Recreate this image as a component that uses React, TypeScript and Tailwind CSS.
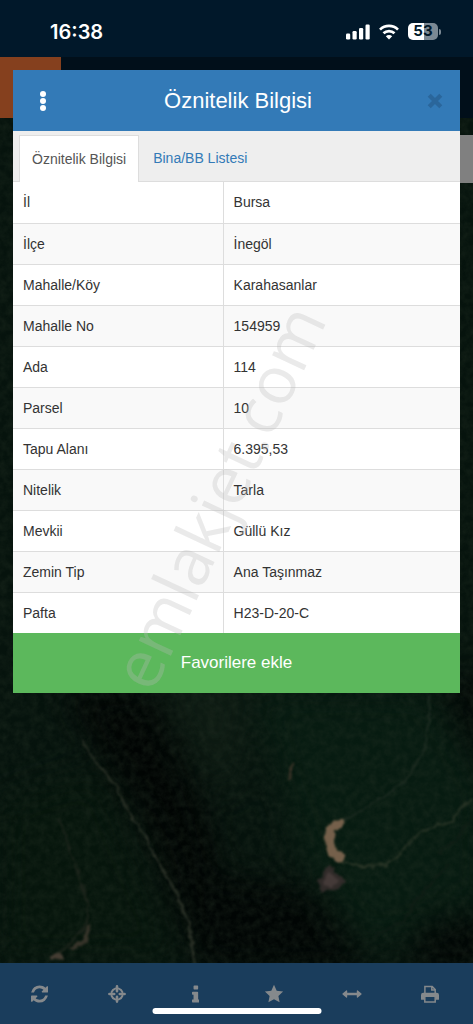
import type { ReactNode } from "react";

const rows = [
    { label: "İl", value: "Bursa" },
    { label: "İlçe", value: "İnegöl" },
    { label: "Mahalle/Köy", value: "Karahasanlar" },
    { label: "Mahalle No", value: "154959" },
    { label: "Ada", value: "114" },
    { label: "Parsel", value: "10" },
    { label: "Tapu Alanı", value: "6.395,53" },
    { label: "Nitelik", value: "Tarla" },
    { label: "Mevkii", value: "Güllü Kız" },
    { label: "Zemin Tip", value: "Ana Taşınmaz" },
    { label: "Pafta", value: "H23-D-20-C" },
];

const tools: { name: string; icon: ReactNode }[] = [
    {
        name: "Yenile",
        icon: (
            <svg viewBox="0 0 1536 1792" className="h-5 fill-current" aria-hidden>
                <path d="M1511 1056q0 5-1 7-64 268-268 434.5t-478 166.5q-146 0-282.5-55t-243.5-157l-129 129q-19 19-45 19t-45-19-19-45v-448q0-26 19-45t45-19h448q26 0 45 19t19 45-19 45l-137 137q71 66 161 102t187 36q134 0 250-65t186-179q11-17 53-117 8-23 30-23h192q13 0 22.5 9.5t9.5 22.5zm25-800v448q0 26-19 45t-45 19h-448q-26 0-45-19t-19-45 19-45l138-138q-148-137-349-137-134 0-250 65t-186 179q-11 17-53 117-8 23-30 23h-199q-13 0-22.5-9.5t-9.5-22.5v-7q65-268 270-434.5t480-166.5q146 0 284 55.5t245 156.5l130-129q19-19 45-19t45 19 19 45z" />
            </svg>
        ),
    },
    {
        name: "Konum",
        icon: (
            <svg viewBox="0 0 18 18" className="h-[18px] fill-none stroke-current" strokeWidth="2" strokeLinecap="round" aria-hidden>
                <path d="M10.8 3.6a5.8 5.8 0 0 1 3.6 3.6M14.4 10.8a5.8 5.8 0 0 1-3.6 3.6M7.2 14.4a5.8 5.8 0 0 1-3.6-3.6M3.6 7.2a5.8 5.8 0 0 1 3.6-3.6" />
                <path d="M9 1.4v4.8M9 11.8v4.8M1.4 9h4.8M11.8 9h4.8" strokeWidth="2.6" />
            </svg>
        ),
    },
    {
        name: "Bilgi",
        icon: (
            <svg viewBox="0 0 640 1664" className="h-5 fill-current" aria-hidden>
                <path d="M640 1344v128q0 26-19 45t-45 19h-512q-26 0-45-19t-19-45v-128q0-26 19-45t45-19h64v-384h-64q-26 0-45-19t-19-45v-128q0-26 19-45t45-19h384q26 0 45 19t19 45v576h64q26 0 45 19t19 45zm-128-1152v192q0 26-19 45t-45 19h-256q-26 0-45-19t-19-45v-192q0-26 19-45t45-19h256q26 0 45 19t19 45z" />
            </svg>
        ),
    },
    {
        name: "Favoriler",
        icon: (
            <svg viewBox="0 0 20 20" className="h-5 fill-current" aria-hidden>
                <path d="M10 .8l2.7 5.9 6.4.8-4.7 4.4 1.2 6.4-5.6-3.1-5.6 3.1 1.2-6.4L.9 7.5l6.4-.8z" />
            </svg>
        ),
    },
    {
        name: "Mesafe",
        icon: (
            <svg viewBox="0 0 20 8" className="h-2 fill-current" aria-hidden>
                <path d="M.6 3.5 4.2.4q.9-.6 1 .5v1.9h9.6V.9q.1-1.1 1-.5l3.6 3.1q.5.5 0 1l-3.6 3.1q-.9.6-1-.5V5.2H5.2v1.9q-.1 1.1-1 .5L.6 4.5q-.5-.5 0-1z" />
            </svg>
        ),
    },
    {
        name: "Yazdır",
        icon: (
            <svg viewBox="0 0 18 18" className="h-[18px]" aria-hidden>
                <path d="M3.9 8V1.5h7.3l3 3V8M10.8 1.5v3.4h3.4" fill="none" stroke="currentColor" strokeWidth="1.5" />
                <path d="M2.2 7.8h13.6A2.2 2.2 0 0 1 18 10v4.2q0 .6-.6.6H15V12H3v2.800H.6q-.6 0-.6-.6V10a2.200 2.200 0 0 1 2.200-2.200z" fill="currentColor" />
                <path d="M3.800 12v4.900h10.400V12" fill="none" stroke="currentColor" strokeWidth="1.500" />
            </svg>
        ),
    },
];

function SatelliteMap() {
    return (
        <svg
            className="absolute inset-0 -z-10 h-full w-full"
            viewBox="0 0 473 1024"
            preserveAspectRatio="xMidYMid slice"
            aria-hidden
        >
            <defs>
                <filter id="canopy" x="0" y="0" width="100%" height="100%" colorInterpolationFilters="sRGB">
                    <feTurbulence type="fractalNoise" baseFrequency="0.13" numOctaves="5" seed="8" />
                    <feColorMatrix values="0 0 0 0 0.15  0 0 0 0 0.2  0 0 0 0 0.15  1.1 0.4 0 0 -0.5" />
                </filter>
                <filter id="rough" filterUnits="userSpaceOnUse" x="0" y="680" width="473" height="300" colorInterpolationFilters="sRGB">
                    <feTurbulence type="fractalNoise" baseFrequency="0.12" numOctaves="3" seed="3" result="noise" />
                    <feDisplacementMap in="SourceGraphic" in2="noise" scale="7" xChannelSelector="R" yChannelSelector="G" />
                    <feGaussianBlur stdDeviation="0.8" />
                </filter>
                <filter id="soft" filterUnits="userSpaceOnUse" x="-80" y="600" width="640" height="480" colorInterpolationFilters="sRGB">
                    <feGaussianBlur stdDeviation="16" />
                </filter>
            </defs>
            <rect width="473" height="1024" fill="#06130d" />
            <g filter="url(#soft)">
                <path d="M60 690h90l60 130 30 150h-40l-50-140z" fill="#010403" />
                <path d="M250 690h180l60 100v110l-120 50-60-70z" fill="#071b11" />
                <path d="M150 680h100l-20 120z" fill="#0e1b13" />
                <path d="M0 800l100-30 80 190H0z" fill="#06150c" />
                <path d="M200 870l110 20 60 80H200zM430 920h60v50h-80zM440 680h50v100z" fill="#010504" />
            </g>
            <rect width="473" height="1024" filter="url(#canopy)" opacity="0.5" />
            <g filter="url(#rough)" fill="none" strokeLinecap="round" strokeLinejoin="round">
                <path d="M83 740l12 22 20 22 12 25 18 27 15 30 15 25 15 35 4 40" stroke="#2a3026" strokeWidth="2" />
                <path d="M60 820l15 45 12 38-2 25-18 18-12 12" stroke="#1c241b" strokeWidth="2" />
                <path d="M89 926l-4 15-14 8" stroke="#37342a" strokeWidth="4" />
                <path d="M53 958l6-2" stroke="#453d33" strokeWidth="6" />
                <path d="M430 697l-4 50-17 30-20 17-27 16-20 12-16 7" stroke="#1d2b21" strokeWidth="2" />
                <path d="M344 863l20 3 22-1 12-8 10-14 19-14 24-8 15-19 12-6" stroke="#293426" strokeWidth="2" />
                <path d="M470 820l-13 20-18 12M448 865l-30 32-14 24-30 15" stroke="#101d15" strokeWidth="2" />
                <path d="M292 765l-3 14" stroke="#3c3428" strokeWidth="3" />
                <path d="M340 823l-9 6-2 9 1 6 3 8 7 6" stroke="#75604b" strokeWidth="9" />
                <path d="M330 867l-10 15 2 8 16-4 5-5-10-8z" fill="#443a38" stroke="#302b29" strokeWidth="4" />
            </g>
        </svg>
    );
}

function StatusBar() {
    return (
        <div className="flex h-[57px] items-center justify-between bg-[#01182a] pr-8 pl-[50px] pt-1.5 text-white">
            <span className="text-xl font-semibold" style={{ fontFamily: 'Inter, sans-serif' }}>16:38</span>
            <div className="flex items-center gap-[9px]">
                <svg width="24" height="16" viewBox="0 0 24 16" fill="currentColor" aria-hidden>
                    <rect x="0" y="9.5" width="4.2" height="6" rx="1.2" />
                    <rect x="6.5" y="7" width="4.2" height="8.5" rx="1.2" />
                    <rect x="13" y="4" width="4.2" height="11.5" rx="1.2" />
                    <rect x="19.5" y="0.5" width="4.2" height="15" rx="1.2" />
                </svg>
                <svg width="20" height="16" viewBox="0 0 20 16" fill="none" stroke="currentColor" strokeWidth="2.7" aria-hidden>
                    <path d="M1 5.6a12.8 12.8 0 0 1 18 0" />
                    <path d="M4.5 9.3a7.8 7.8 0 0 1 11 0" />
                    <path d="M10 15.5l-3.2-3.2a4.5 4.500 0 0 1 6.400 0z" fill="currentColor" stroke="none" />
                </svg>
                <div className="flex items-center gap-px">
                    <div
                        className="flex h-[17px] w-[30px] items-center justify-center rounded-[5px] bg-linear-to-r from-white from-53% to-[#7b8994] to-53% text-[15px] font-bold text-[#01182a]"
                        style={{ fontFamily: 'Inter, sans-serif' }}
                    >
                        53
                    </div>
                    <span className="h-[6px] w-[2px] rounded-r-full bg-[#7b8994]" />
                </div>
            </div>
        </div>
    );
}

function AttributePanel() {
    return (
        <section className="absolute inset-x-[13px] top-[70px] bg-white">
            <header className="flex h-[61px] items-center justify-between bg-[#337ab7] pr-[17px] pl-5 text-white">
                <button type="button" aria-label="Menü" className="flex w-5 flex-col items-center gap-px">
                    <span className="size-[6px] rounded-full bg-white" />
                    <span className="size-[6px] rounded-full bg-white" />
                    <span className="size-[6px] rounded-full bg-white" />
                </button>
                <h1 className="text-[22px]">Öznitelik Bilgisi</h1>
                <button type="button" aria-label="Kapat" className="flex w-5 justify-end text-[#2a669b]">
                    <svg width="16" height="16" viewBox="0 0 15 15" stroke="currentColor" strokeWidth="4" strokeLinecap="square" aria-hidden>
                        <path d="M3.5 3.5l8 8M11.5 3.5l-8 8" />
                    </svg>
                </button>
            </header>

            <nav className="flex border-b border-[#ddd] bg-[#eee] px-1.5 pt-1">
                <button type="button" className="-mb-px h-[47px] border border-b-0 border-[#ddd] bg-white px-3 text-sm text-[#555]">
                    Öznitelik Bilgisi
                </button>
                <button type="button" className="h-[46px] px-[14px] text-sm text-[#337ab7]">
                    Bina/BB Listesi
                </button>
            </nav>

            <table className="w-full table-fixed border-collapse text-left text-sm text-[#333]">
                <tbody>
                    {rows.map((row) => (
                        <tr key={row.label} className="h-[41px] border-b border-[#ddd] last:border-b-0 even:bg-[#f9f9f9]">
                            <th scope="row" className="w-[47%] border-r border-[#ddd] px-[10px] font-normal">{row.label}</th>
                            <td className="px-[10px]">{row.value}</td>
                        </tr>
                    ))}
                </tbody>
            </table>

            <button type="button" className="h-[60px] w-full bg-[#5cb85c] text-[17px] text-white">
                Favorilere ekle
            </button>
        </section>
    );
}

export default function App() {
    return (
        <div
            className="relative isolate flex min-h-screen flex-col overflow-hidden"
            style={{ fontFamily: '"Liberation Sans", Arial, sans-serif' }}
        >
            <SatelliteMap />
            <StatusBar />
            <div className="h-[61px] bg-[#010f1a]">
                <div className="h-full w-[61px] bg-[#85401e]" />
            </div>
            <main className="flex-1 pt-[17px]">
                <div className="ml-auto h-12 w-16 bg-[#808080]" />
            </main>

            <footer className="grid h-[61px] grid-cols-6 bg-[#1a3d5c] pr-1 text-[#85898c]">
                {tools.map((tool) => (
                    <button key={tool.name} type="button" aria-label={tool.name} className="flex items-center justify-center">
                        {tool.icon}
                    </button>
                ))}
            </footer>

            <AttributePanel />

            {/* Filigran */}
            <div className="pointer-events-none absolute inset-0 flex items-center justify-center pr-10 pb-8 select-none" aria-hidden>
                <span
                    className="-rotate-65 text-[66px] leading-none whitespace-nowrap text-[#bbb]/30"
                    style={{ fontFamily: '"Open Sans", sans-serif' }}
                >
                    emlakjet.com
                </span>
            </div>

            {/* Home göstergesi */}
            <span className="absolute bottom-[10px] left-1/2 h-[6px] w-[169px] -translate-x-1/2 rounded-full bg-white" />
        </div>
    );
}
